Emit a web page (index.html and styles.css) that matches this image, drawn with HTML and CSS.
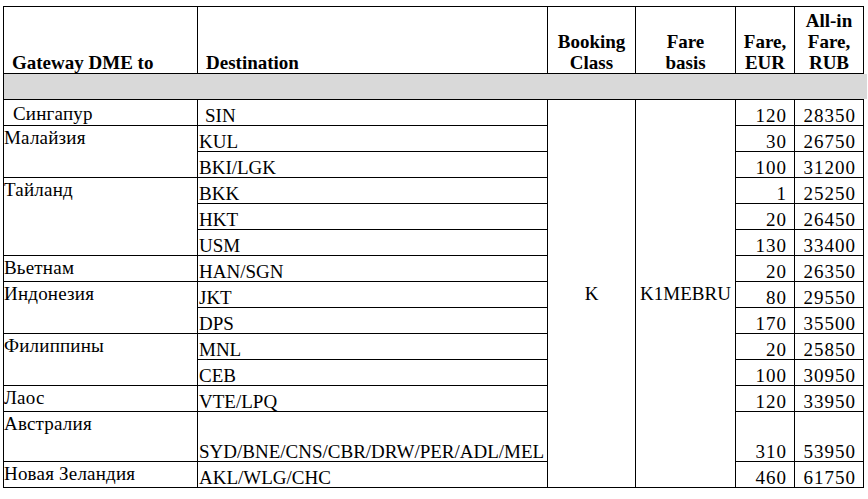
FILE: index.html
```html
<!DOCTYPE html>
<html lang="ru">
<head>
<meta charset="utf-8">
<title>Fares</title>
<link rel="stylesheet" href="styles.css">
</head>
<body>
<div class="fares">
  <div class="h h-left">Gateway DME to</div>
  <div class="h h-left">Destination</div>
  <div class="h h-center">Booking<br>Class</div>
  <div class="h h-center">Fare<br>basis</div>
  <div class="h h-center">Fare,<br>EUR</div>
  <div class="h h-center">All-in<br>Fare,<br>RUB</div>

  <div class="band"></div>

  <div class="gw gw-first">Сингапур</div>
  <div class="dest dest-first">SIN</div>
  <div class="mid span14">K</div>
  <div class="mid span14">K1MEBRU</div>
  <div class="num">120</div>
  <div class="num">28350</div>

  <div class="gw span2">Малайзия</div>
  <div class="dest">KUL</div>
  <div class="num">30</div>
  <div class="num">26750</div>
  <div class="dest">BKI/LGK</div>
  <div class="num">100</div>
  <div class="num">31200</div>

  <div class="gw span3">Тайланд</div>
  <div class="dest">BKK</div>
  <div class="num">1</div>
  <div class="num">25250</div>
  <div class="dest">HKT</div>
  <div class="num">20</div>
  <div class="num">26450</div>
  <div class="dest">USM</div>
  <div class="num">130</div>
  <div class="num">33400</div>

  <div class="gw">Вьетнам</div>
  <div class="dest">HAN/SGN</div>
  <div class="num">20</div>
  <div class="num">26350</div>

  <div class="gw span2">Индонезия</div>
  <div class="dest">JKT</div>
  <div class="num">80</div>
  <div class="num">29550</div>
  <div class="dest">DPS</div>
  <div class="num">170</div>
  <div class="num">35500</div>

  <div class="gw span2">Филиппины</div>
  <div class="dest">MNL</div>
  <div class="num">20</div>
  <div class="num">25850</div>
  <div class="dest">CEB</div>
  <div class="num">100</div>
  <div class="num">30950</div>

  <div class="gw">Лаос</div>
  <div class="dest">VTE/LPQ</div>
  <div class="num">120</div>
  <div class="num">33950</div>

  <div class="gw">Австралия</div>
  <div class="dest">SYD/BNE/CNS/CBR/DRW/PER/ADL/MEL</div>
  <div class="num">310</div>
  <div class="num">53950</div>

  <div class="gw">Новая Зеландия</div>
  <div class="dest">AKL/WLG/CHC</div>
  <div class="num">460</div>
  <div class="num">61750</div>
</div>
</body>
</html>
```

FILE: styles.css
```css
html, body {
  margin: 0;
  padding: 0;
  background: #fff;
}

body {
  font-family: "Liberation Serif", "Times New Roman", serif;
  font-size: 19px;
  color: #000;
}

.fares {
  display: grid;
  grid-template-columns: 193px 349px 87px 99px 58px 68px;
  grid-template-rows: 66px 25px repeat(12, 25px) 49px 25px;
  gap: 1px;
  background: #000;
  border: 1px solid #000;
  margin: 6px 0 0 3px;
  width: max-content;
}

.fares > div {
  background: #fff;
  white-space: nowrap;
}

.h {
  display: flex;
  flex-direction: column;
  justify-content: flex-end;
  font-weight: bold;
  line-height: 21px;
}

.h-left {
  padding-left: 8px;
}

.h-center {
  align-items: center;
  text-align: center;
}

.fares > .band {
  grid-column: 1 / -1;
  background: #d9d9d9;
  margin-right: -4px;
}

.gw {
  line-height: 19px;
  padding-top: 2px;
  letter-spacing: 0.2px;
}

.gw-first {
  padding-left: 9px;
  padding-top: 4px;
}

.dest {
  display: flex;
  align-items: flex-end;
  line-height: 19px;
  padding-left: 1px;
}

.dest-first {
  padding-left: 7px;
}

.num {
  display: flex;
  align-items: flex-end;
  justify-content: flex-end;
  line-height: 19px;
  padding-right: 7px;
  letter-spacing: 1px;
}

.mid {
  display: flex;
  align-items: center;
  justify-content: center;
}

.span2 { grid-row: span 2; }
.span3 { grid-row: span 3; }
.span14 { grid-row: span 14; }
```
